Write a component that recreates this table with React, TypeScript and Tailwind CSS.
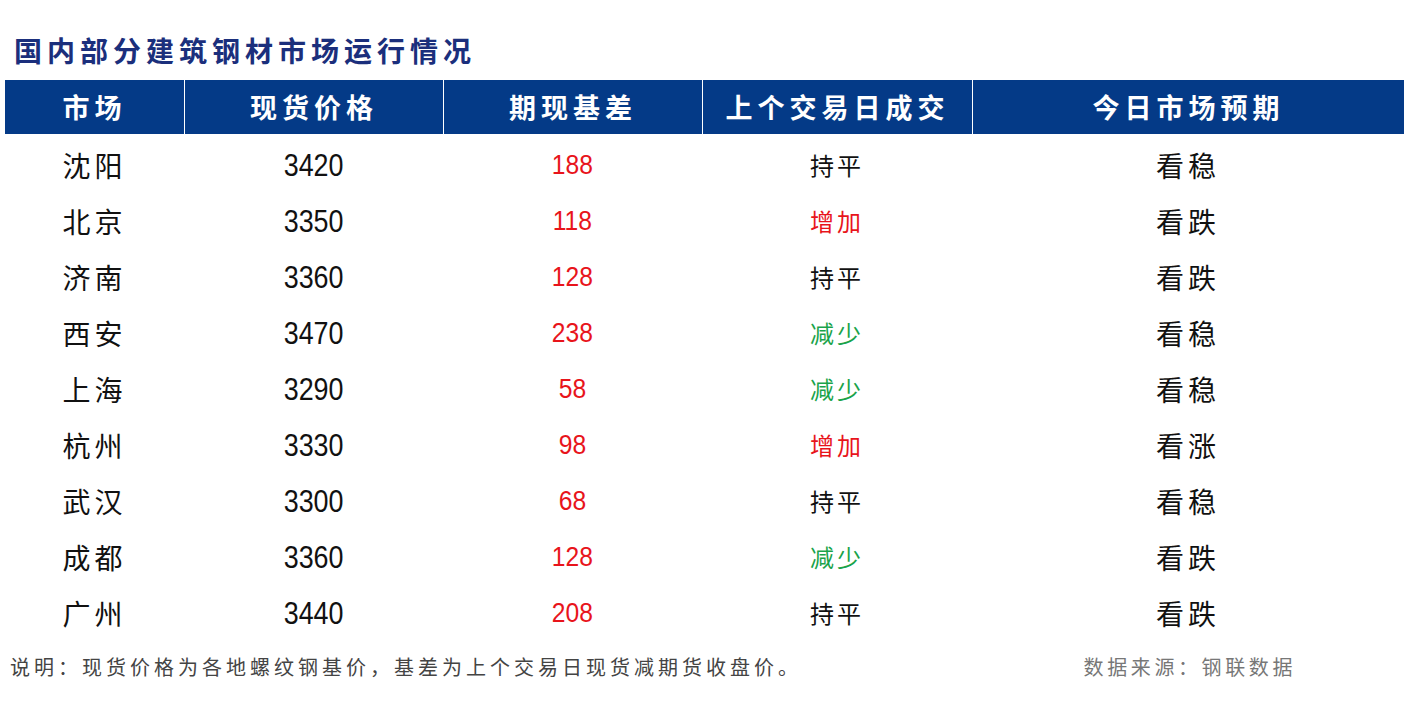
const rows = [
  { city: '沈阳', price: '3420', basis: '188', trade: '持平', expect: '看稳' },
  { city: '北京', price: '3350', basis: '118', trade: '增加', expect: '看跌' },
  { city: '济南', price: '3360', basis: '128', trade: '持平', expect: '看跌' },
  { city: '西安', price: '3470', basis: '238', trade: '减少', expect: '看稳' },
  { city: '上海', price: '3290', basis: '58', trade: '减少', expect: '看稳' },
  { city: '杭州', price: '3330', basis: '98', trade: '增加', expect: '看涨' },
  { city: '武汉', price: '3300', basis: '68', trade: '持平', expect: '看稳' },
  { city: '成都', price: '3360', basis: '128', trade: '减少', expect: '看跌' },
  { city: '广州', price: '3440', basis: '208', trade: '持平', expect: '看跌' },
];

const headers = ['市场', '现货价格', '期现基差', '上个交易日成交', '今日市场预期'];
const cols = 'grid grid-cols-[179px_259px_259px_270px_1fr]';
const cjk = "font-['Noto_Sans_CJK_SC',sans-serif]";
const num = "font-['Liberation_Sans_Narrow','Liberation_Sans',sans-serif]";

function tradeColor(t: string) {
  if (t === '增加') return 'text-[#e8141b]';
  if (t === '减少') return 'text-[#1aa34a]';
  return 'text-[#111]';
}

export default function App() {
  return (
    <div className={`w-[1408px] h-[702px] bg-white overflow-hidden ${cjk}`}>
      <h1 className="pt-[31px] pl-[14px] h-[80px] text-[28px] leading-[38px] font-bold tracking-[5px] text-[#1b2f7c]">
        国内部分建筑钢材市场运行情况
      </h1>

      <div className={`${cols} ml-[5px] mr-[4px] h-[54px] bg-[#043a87] text-white`}>
        {headers.map((h, i) => (
          <div
            key={h}
            className={`flex items-center justify-center text-[27px] font-bold tracking-[5px] ${i > 0 ? 'border-l border-white' : ''}`}
          >
            {h}
          </div>
        ))}
      </div>

      <div className="ml-[5px] mr-[4px] pt-[3px]">
        {rows.map((r) => (
          <div key={r.city} className={`${cols} h-[56px] items-center text-center`}>
            <div className="text-[28px] tracking-[4px] text-[#111]">{r.city}</div>
            <div>
              <span className={`${num} inline-block scale-x-[0.84] text-[32px] text-[#111]`}>{r.price}</span>
            </div>
            <div>
              <span className={`${num} inline-block scale-x-[0.88] text-[28px] text-[#e8141b]`}>{r.basis}</span>
            </div>
            <div className={`text-[24px] tracking-[3px] ${tradeColor(r.trade)}`}>{r.trade}</div>
            <div className="text-[28px] tracking-[4px] text-[#111]">{r.expect}</div>
          </div>
        ))}
      </div>

      <div className="flex items-center justify-between mt-[11px] pl-[10px] pr-[112px] text-[20px]">
        <span className="text-[#444] tracking-[4px]">
          说明：现货价格为各地螺纹钢基价，基差为上个交易日现货减期货收盘价。
        </span>
        <span className="text-[#777] tracking-[3.6px]">数据来源：钢联数据</span>
      </div>
    </div>
  );
}
